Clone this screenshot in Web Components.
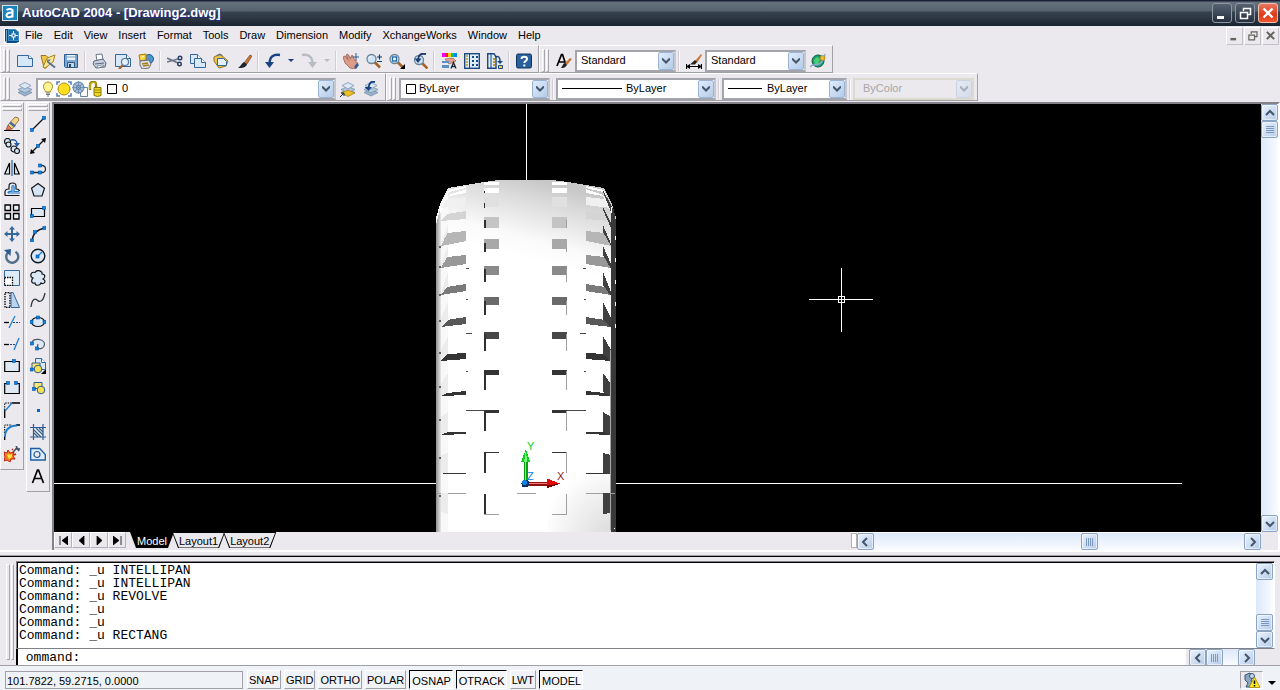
<!DOCTYPE html>
<html lang="en">
<head>
<meta charset="utf-8">
<title>AutoCAD 2004 - [Drawing2.dwg]</title>
<style>
html,body{margin:0;height:100%}
body{font:11px/13px "Liberation Sans",Arial,sans-serif;color:#000;background:#ebe9ed;overflow:hidden}
</style>
</head>
<body>
<cad-app></cad-app>
<script>
const define=(name,css,html,init)=>{
  const t=document.createElement('template');
  t.innerHTML='<style>*{box-sizing:border-box}'+css+'</style>'+html;
  customElements.define(name,class extends HTMLElement{
    constructor(){super();this.attachShadow({mode:'open'})}
    connectedCallback(){
      if(this.shadowRoot.childNodes.length)return;
      this.shadowRoot.append(t.content.cloneNode(true));
      if(init)init.call(this,this.shadowRoot);
    }
  });
};

/* ---------- icons: 16 x 16 grid ---------- */
const dot=(x,y)=>`<rect x="${x-1.5}" y="${y-1.5}" width="3" height="3" fill="#0a84e8" stroke="#0050a0" stroke-width=".6"/>`;
const page=(x,y,w,h)=>`<path d="M${x} ${y}h${w-4}l4 4v${h-4}h${-w}z" fill="#d8e8f6" stroke="#34689c"/><path d="M${x+w-4} ${y}v4h4" fill="#fff" stroke="#34689c"/>`;
const lens=(x,y)=>`<path d="M${x+3} ${y+3}l5.500 5.500" stroke="#a86428" stroke-width="2.600"/><circle cx="${x}" cy="${y}" r="4.500" fill="#cfe4f4" stroke="#6c8498" stroke-width="1.300"/><path d="M${x-2.5} ${y-.5}a2.500 2.500 0 0 1 2-2" fill="none" stroke="#fff"/>`;
const stack='<g stroke="#6c88a8" stroke-width=".7"><path d="M1 11.500l7-3 7 3-7 3.500z" fill="#9cb4cc"/><path d="M1 8.500l7-3 7 3-7 3.500z" fill="#b4c8dc"/><path d="M2 4.500l6-3 6 3-6 3.500z" fill="#dce8f2"/></g>';
const brush='<path d="M8 10l6-8 2 1-5 8z" fill="#c87838" stroke="#5c3418" stroke-width=".6"/><path d="M8 9l3 2.500c-1 3-5 3.500-9 3.500 3-2 3-4 6-6z" fill="#20242c"/>';
const I={
app:'<rect x=".5" y=".5" width="15" height="15" fill="#1c84bc" stroke="#d0e4f0"/><path d="M4.500 5q3.500-2 6 0v7.500M10.500 7.500c-7-.5-7.500 4.500-3.500 4.700q2.500 0 3.500-2" fill="none" stroke="#fff" stroke-width="2"/>',
doc:'<path d="M0 0h16v16H0z" fill="#fff"/><path d="M1 1h10l4 3v10l-3 1H3l-2-2z" fill="#0a4c84"/><path d="M4.500 1.500h7l3 3v8h-10z" fill="#1870ac" stroke="#60a8d8" stroke-width=".6"/><path d="M2.500 2v12" stroke="#8cb8d8" stroke-width=".8"/><path d="M9.500 3v9M5 7.500h9" stroke="#fff"/><rect x="8" y="6" width="3" height="3" fill="#1870ac" stroke="#fff"/>',
new:'<path d="M.5 2.500h11l4 3v8h-15z" fill="#d4e8f8" stroke="#34689c"/><path d="M11.500 2.500v3h4" fill="#fff" stroke="#34689c"/>',
open:'<path d="M1 2.500h5l2 2h4L6 15H4z" fill="#f0c848" stroke="#9c7420"/><path d="M3 14L7 5l8-3-2 7-8 6z" fill="#fce890" stroke="#a88020"/><path d="M8 9l7 5.500" stroke="#5c7490" stroke-width="2"/><path d="M7 10V6.500h4z" fill="#5c7490"/>',
save:'<path d="M1.500 1.500h13v13h-12l-1-1z" fill="#7ca8d4" stroke="#2c5c94"/><path d="M4 2h8v5H4z" fill="#e8f4fc"/><path d="M4 4h8" stroke="#7c9cbc"/><path d="M4.500 9.500h7v5h-7z" fill="#c4d8e8" stroke="#34587c"/><path d="M6 11h2v3H6z" fill="#204470"/>',
print:'<path d="M4 1.500l6-.5 1 6-6 1z" fill="#fff" stroke="#68788c"/><path d="M2 8l9-2 3 4-1 4-9 1-3-4z" fill="#c8d0dc" stroke="#586880"/><path d="M3 11l9-1" stroke="#586880"/><path d="M5 13l6-1 1 1-6 2z" fill="#fff" stroke="#586880" stroke-width=".6"/>',
preview:page(.5,1.5,15,12)+'<path d="M8 12l-4 4" stroke="#a86428" stroke-width="2.200"/><circle cx="10" cy="9" r="3.500" fill="#e4f2fc" stroke="#5c7894" stroke-width="1.200"/>',
publish:'<circle cx="11" cy="6" r="4.500" fill="#4c94cc" stroke="#1c5c94"/><path d="M1 2l7-1v6l-6 1z" fill="#ffd040" stroke="#a87c10"/><path d="M3 5l3-2" stroke="#fff"/><path d="M2 8l9-1 2 4-2 4-7 1-2-4z" fill="#dce0e8" stroke="#686c78"/><path d="M4 11l6-1M5 13l6-1" stroke="#a87c10" stroke-width="1.500"/>',
cut:'<path d="M0 5l11 5M0 9l11-3" stroke="#6c7888" stroke-width="1.600"/><circle cx="13" cy="5" r="1.800" fill="none" stroke="#283c64" stroke-width="1.400"/><circle cx="12.500" cy="11" r="1.800" fill="none" stroke="#283c64" stroke-width="1.400"/>',
copy:page(.5,1.5,11,9)+page(4.5,5.5,11,9),
paste:'<path d="M1 4l6-3 8 7-2 5-7 2-5-7z" fill="#ecc450" stroke="#94741c"/><path d="M4.500 5.500h6l3 3v4h-9z" fill="#e4f0fa" stroke="#34689c"/><path d="M4 3q3-3 5 0" fill="none" stroke="#68707c" stroke-width="1.600"/>',
brush:brush,
undo:'<path d="M15 2C8 1 4.500 4 4.500 11" fill="none" stroke="#1c4484" stroke-width="2.400"/><path d="M0 9h9l-4.500 6z" fill="#1c4484"/>',
redo:'<path d="M1 2c7-1 10.500 2 10.500 9" fill="none" stroke="#b8bcc0" stroke-width="2.400"/><path d="M7 9h9l-4.500 6z" fill="#b8bcc0"/>',
pan:'<path d="M0 4l2-1 3 3-2-4 1.500-1L8 5l1-3 4 7 2 1-3 6-5-1-5-5z" fill="#dc9c88" stroke="#8c5448" stroke-width=".7"/><path d="M2 3l4 5M4.500 1.500L8 7" stroke="#a86c5c" stroke-width=".7"/><path d="M13 0v8M9.500 4h7" stroke="#2c5c94"/><path d="M11 14l3-4 2 2-3 4z" fill="#2c5c94"/>',
zoomrt:lens(5.5,6)+'<path d="M11 4h5M13.500 1.500v5M11 8.500h5" stroke="#103c70" stroke-width="1.200"/>',
zoomwin:lens(5.5,6)+'<rect x="3.500" y="4" width="4" height="4" fill="#fff" stroke="#1c64a4" stroke-width="1.300"/><path d="M16 11v5h-5z" fill="#000"/>',
zoomprev:lens(7,7)+'<path d="M14 1C9 0 6 2 6 7" fill="none" stroke="#1c3c74" stroke-width="2"/><path d="M2.500 5.500h7L6 10z" fill="#1c3c74"/>',
props:'<path d="M1 0h3v4H1z" fill="#f0f"/><path d="M4 0h3v4H4z" fill="#e82020"/><path d="M7 0h3v4H7z" fill="#fc0"/><path d="M10 0h3v4h-3z" fill="#0c4"/><path d="M13 0h3v4h-3z" fill="#08f"/><path d="M4 6l8-1 3 3-7 3z" fill="#e0a08c" stroke="#8c5448" stroke-width=".6"/><path d="M1 8h7v2H1zM1 12h7v3H1z" fill="#5890c4"/><path d="M10 15.500l2.500-6 2.500 6M11 13.500h3" fill="none" stroke="#202838" stroke-width="1.300"/>',
dc:'<rect x=".7" y=".7" width="14.600" height="14.600" fill="#dcecf8" stroke="#1c4880" stroke-width="1.400"/><path d="M5.500 1v14" stroke="#1c4880"/><path d="M2 3h2M2 6h2M2 9h2M2 12h2" stroke="#c89820" stroke-width="1.500"/><path d="M8 4h2M12 4h2M8 8h2M12 8h2M8 12h2M12 12h2" stroke="#1c4880" stroke-width="2"/>',
palettes:'<path d="M.7.7H7l2 3v11.600H.7z" fill="#dcecf8" stroke="#1c4880" stroke-width="1.400"/><path d="M4 1v14" stroke="#1c4880"/><path d="M6 6h2M6 9h2M6 12h2" stroke="#c89820" stroke-width="2"/><path d="M8 4q5-2 5 4" fill="none" stroke="#1c4880" stroke-width="1.500"/><path d="M10 8h6l-3 3z" fill="#1c4880"/><path d="M11.500 12.500h4v3h-4z" fill="#fc4" stroke="#1c4880"/>',
help:'<rect x=".5" y="1" width="15" height="14" rx="1.500" fill="#28609c" stroke="#103460"/><path d="M5.500 6c0-3 5.500-3 5.500 0 0 2-2.700 2-2.700 4M8.300 11.500v2" fill="none" stroke="#fff" stroke-width="2"/>',
textstyle:'<path d="M1 13L5.500 1.500h1L10 12M3 9h6" fill="none" stroke="#000" stroke-width="1.700"/><path d="M9 10l5-5 2 1-5 6z" fill="#c87838"/><path d="M8 10l3 2c-2 3-4 3-6 3z" fill="#222"/>',
dimstyle:'<path d="M0 13.500h16M.5 11v5M15.500 11v5" stroke="#000" stroke-width="1.200"/><path d="M0 13.500l4-2.500v5zM16 13.500l-4-2.500v5z"/><path d="M9 8l6-7 1 1-5 8z" fill="#c87838"/><path d="M9 7l2 2-2 2.500H4z" fill="#222"/>',
web:'<circle cx="8" cy="8" r="6" fill="#18a070" stroke="#0c5c48"/><path d="M4 7l3-3 3 2-2 5-3 1z" fill="#50cc70"/><path d="M0 14C3 10 5 13 9 11S14 6 15 1" fill="none" stroke="#88a8d0" stroke-width="1.600"/><circle cx="12.500" cy="5" r="2.500" fill="#e8bc30" stroke="#947010" stroke-width=".6"/>',
layers:stack,
layercur:stack+'<path d="M1 12l7-3 7 3-7 3.500z" fill="#ecc020" stroke="#94781c" stroke-width=".6"/><path d="M0 16l4-4M1 12h3v3" fill="none" stroke="#102c5c"/>',
layerprev:stack+'<path d="M12 1C8 0 6 2 5.500 7" fill="none" stroke="#1c4484" stroke-width="2"/><path d="M1.500 6h7.500L5.500 10z" fill="#1c4484"/>',
bulb:'<path d="M5.500 11C5 8.500 3.500 8 3.500 5.500a4.500 4.500 0 0 1 9 0c0 2.500-1.500 3-2 5.500z" fill="#fff490" stroke="#a88c20"/><path d="M6 12h4M6 13.500h4M7 15h2" stroke="#707478" stroke-width="1.200"/>',
sun:'<path d="M1 4V1h3M12 1h3v3M15 12v3h-3M4 15H1v-3" stroke="#5880b0" fill="none" stroke-width="1.500"/><circle cx="8" cy="8" r="6" fill="#ffe020" stroke="#a88810"/>',
vpfreeze:'<path d="M8.500 6.500h7v9h-7z" fill="#fff" stroke="#6484a4"/><circle cx="6.500" cy="6.500" r="5.500" fill="#a8bcd4" stroke="#587ca0"/><circle cx="6.500" cy="6.500" r="2" fill="#dce8f4" stroke="#587ca0"/><path d="M6.500 0v13M0 6.500h13M2 2l9 9M11 2l-9 9" stroke="#587ca0" stroke-width=".6"/>',
lock:'<path d="M2 9V4c0-4 6-4 6-1v4" fill="none" stroke="#948010" stroke-width="2.400"/><path d="M2 8V4c0-3 6-3 6-1" fill="none" stroke="#ecd820" stroke-width=".8"/><path d="M6 6.500h7v8q-3.500 2-7 0z" fill="#ecd820" stroke="#887408"/><path d="M6 9h7M6 11.500h7" stroke="#a08c10"/>',
swatch:'<path d="M3.500 3.500h9v9h-9z" fill="#fff" stroke="#000"/>',
erase:'<path d="M0 14.500h16" stroke="#000"/><path d="M2 14l2-5 4 4z" fill="#e87858" stroke="#782c1c" stroke-width=".6"/><path d="M4 9l7-8q4 0 4 3l-7 9z" fill="#f4d488" stroke="#705020" stroke-width=".7"/><path d="M6 6.500l5 4" stroke="#4868a0" stroke-width="2.400"/>',
copyobj:'<g fill="#d8e4f0" stroke="#101820" stroke-width="1.200"><circle cx="3.500" cy="3.500" r="3"/><circle cx="4.500" cy="6.500" r="2.500"/><circle cx="10" cy="11" r="3"/><circle cx="13" cy="13" r="2.500"/></g><path d="M7 2q6-1 6 4" fill="none" stroke="#1c5ca0" stroke-width="1.500"/><path d="M10 5h6l-3 4z" fill="#1c5ca0"/>',
mirror:'<path d="M8 0v16" stroke="#1c64a4" stroke-width="1.200"/><path d="M5.500 3v11H.8zM10.500 3v11h4.700z" fill="#e4ecf4" stroke="#000" stroke-width="1.200"/>',
offset:'<path d="M1 13.500V10q0-3 4-3V4q0-3 3.500-3T12 4v3q3 0 3.500 2M1 13.500h14.500" fill="none" stroke="#101820" stroke-width="1.200"/><path d="M4 11q0-2 4-1.500V4.500q1-2 2 0V9.500h5M4 11h12" fill="none" stroke="#1c7cd0" stroke-width="1.200"/>',
array:'<g fill="#e8f0f8" stroke="#000" stroke-width="1.300"><path d="M1 1h5.500v5.500H1zM9.500 1H15v5.500H9.500zM1 9.500h5.500V15H1zM9.500 9.500H15V15H9.500z"/></g>',
move:'<path d="M8 0l3 3.500H9V7h3.500V5L16 8l-3.500 3V9H9v3.500h2L8 16l-3-3.500h2V9H3.500v2L0 8l3.500-3v2H7V3.500H5z" fill="#34689c"/>',
rotate:'<path d="M4 4.500a6 6 0 1 0 7.500-.8" fill="none" stroke="#50708c" stroke-width="2.400"/><path d="M0 2l7-1-.5 7z" fill="#2c5c94"/>',
scale:'<path d="M.5.500h15v15h-15z" fill="#dcecf8" stroke="#34689c"/><path d="M.5 7.500h8v8h-8z" fill="#fff" stroke="#000" stroke-width="1.300" stroke-dasharray="1.500 1"/>',
stretch:'<path d="M1 .5h5v15H1z" fill="none" stroke="#000" stroke-width="1.300" stroke-dasharray="1.500 1"/><path d="M7 .5h2l6.500 15H7z" fill="#bcd4ec" stroke="#34689c"/>',
trim:'<path d="M0 8.500h5" stroke="#000" stroke-width="1.300"/><path d="M5 14L11 2" stroke="#1c7cd0" stroke-width="1.300"/><path d="M9 8.500h7" stroke="#1c4880" stroke-dasharray="2 1"/>',
extend:'<path d="M0 8.500h5" stroke="#000" stroke-width="1.300"/><path d="M6 8.500h5" stroke="#1c4880" stroke-dasharray="2 1"/><path d="M10 14l5-12" stroke="#1c7cd0" stroke-width="1.300"/>',
break1:'<path d="M.7 3.500h14.600v10H.7z" fill="#e0e8f4" stroke="#000" stroke-width="1.200"/>'+dot(10,3),
break2:'<path d="M4 3.500H.7v10h14.600v-10H12" fill="#e0e8f4" stroke="#000" stroke-width="1.200"/>'+dot(4,3)+dot(12,3),
chamfer:'<path d="M.7 16V8M8 1h8" stroke="#000" stroke-width="1.300"/><path d="M.7 8V1H8" fill="none" stroke="#000" stroke-dasharray="1.500 1"/><path d="M1 9l7-8" stroke="#1c7cd0" stroke-width="1.300"/>',
fillet:'<path d="M.7 16v-4M12 1h4" stroke="#000" stroke-width="1.300"/><path d="M.7 9V1H8" fill="none" stroke="#000" stroke-dasharray="1.500 1"/><path d="M1 13Q1 2 13 1.500" fill="none" stroke="#1c7cd0" stroke-width="1.800"/>',
explode:'<path d="M0 6l3 1 1-3 2 3 4-1-1 4 2 3-4 0-1 3-3-2-3 1 1-4z" fill="#f08020" stroke="#c02010"/><path d="M3 9l2-1 1 1 2-1v3l-3 2z" fill="#ffe840"/><path d="M9 6l4-4M12 0l3 5M11 3l5 0" stroke="#404c60" stroke-width="1.500"/><path d="M10 9l2-1M8 3l1 1" stroke="#c02010" stroke-width="1.500"/>',
line:'<path d="M2 14L14 2" stroke="#101010" stroke-width="1.300"/>'+dot(2,14)+dot(14,2),
xline:'<path d="M2 14L14 2" stroke="#101010" stroke-width="1.200"/><path d="M0 16l1-5 4 4zM16 0l-1 5-4-4z" fill="#000"/>'+dot(8,8),
pline:'<path d="M2 12.500h8M9 5.500h3a3 3 0 0 1 0 7h-2" fill="none" stroke="#203040" stroke-width="1.300"/>'+dot(2,12.500)+dot(10,12.500)+dot(10,5.500),
polygon:'<path d="M8 1.500l6.500 4.700L12 14H4L1.500 6.200z" fill="#d8e4f4" stroke="#101820" stroke-width="1.200"/>',
rect:'<path d="M1.500 4.500h13v8h-13z" fill="#dce8f6" stroke="#000" stroke-width="1.200"/>'+dot(1.8,12)+dot(14,4),
arc:'<path d="M2 15Q3 4 15 2" fill="none" stroke="#101820" stroke-width="1.300"/>'+dot(2,14.500)+dot(5,6)+dot(14.400,2),
circle:'<circle cx="8" cy="8" r="6.800" fill="#dce8f6" stroke="#101820" stroke-width="1.400"/><path d="M8 8l4-4" stroke="#1c7cd0" stroke-width="1.200"/>'+dot(7.500,8.500),
cloud:'<path d="M3 8C-1 7 1 1 5 2.500 7-1 13 1 12 4c4 0 3 4 1 5 4 2 1 6-2 4-1 3-6 3-6 0-4 1-4-3-2-5z" fill="#dce8f6" stroke="#101820" stroke-width="1.200"/>',
spline:'<path d="M1 15C2 7 5 6 7 8s6 3 8-7" fill="none" stroke="#303840" stroke-width="1.300"/>',
ellipse:'<ellipse cx="8" cy="8" rx="6.500" ry="4.500" fill="#dce8f6" stroke="#101820" stroke-width="1.200"/>'+dot(1.500,8)+dot(14.500,8)+dot(8,3.500),
ellarc:'<path d="M2 7C3 1 15 3 14.500 8.500 14 13 10 13 7 12.500L8 8" fill="#dce8f6" stroke="#505860" stroke-width="1.200"/>'+dot(2,7.500)+dot(7,12.500),
insblock:page(5.5,.5,10,11)+'<path d="M2 5h8v6H2z" fill="#ffe868" stroke="#2c5c94"/><circle cx="8" cy="11" r="3.800" fill="#f4e050" stroke="#2c5c94"/>'+dot(1.600,11.500)+'<path d="M16 11v5h-5z"/>',
mkblock:'<path d="M4 2.500h8v6H4z" fill="#ffe868" stroke="#2c5c94"/><circle cx="11" cy="10" r="3.800" fill="#f4e050" stroke="#2c5c94"/>'+dot(4,9),
point:'<path d="M7 7h3v3H7z" fill="#0a64c0"/>',
hatch:'<path d="M4 4h9v9H4z" fill="#e8f2fa"/><path d="M4 6l7 7M4 9l4 4M6 4l7 7M9 4l4 4M12 4l1 1" stroke="#405c80" stroke-width="1.200"/><path d="M0 3.500h16M0 13h16M3.500 0v16M13 0v16" stroke="#2c5c94" stroke-width="1.200"/>',
region:'<path d="M.7 2.500h9l5.600 6v5.500H.7z" fill="#dcecf8" stroke="#1c5ca0" stroke-width="1.300"/><circle cx="7" cy="8.500" r="3" fill="#ebe9ed" stroke="#2c5c94" stroke-width="1.200"/>',
mtext:'<path d="M2.500 15L7.500 2h1l5 13M4.500 10.500h7" fill="none" stroke="#000" stroke-width="1.700"/>',
tray:'<path d="M1 3l5-2 3 3-2 5 4 4-2 2H2l2-4-3-3z" fill="#8ca4bc" stroke="#34587c"/><circle cx="8" cy="4" r="2.500" fill="#c4d8e8" stroke="#34587c"/><path d="M10.500 5L16 15.500H5z" fill="#ffe820" stroke="#a08808" stroke-width=".8"/><path d="M10.500 8.500V12M10.500 13v1.500" stroke="#000" stroke-width="1.500"/>'
};
define('cad-icon',':host{display:block;width:16px;height:16px;flex:none}svg{display:block;width:100%;height:100%}','<svg viewBox="0 0 16 16" aria-hidden="true"></svg>',function(r){r.querySelector('svg').innerHTML=I[this.getAttribute('name')]||''});

define('cad-tool',':host{display:block;flex:none;width:23px;height:22px}:host([side]){width:22px}:host([tight]){width:13px}button{width:100%;height:100%;padding:0;border:0;background:none;display:flex;align-items:center;justify-content:center}button:hover{background:#fff8}i{border:3px solid transparent;border-top-color:var(--arrow,#1c3c80);border-bottom:0}',
'<button type="button"></button>',function(r){const b=r.querySelector('button'),n=this.getAttribute('icon');b.setAttribute('aria-label',n||'More');b.innerHTML=n?`<cad-icon name="${n}"></cad-icon>`:'<i></i>'});

define('cad-grip',':host{display:flex;gap:1px;flex:none;width:12px;height:23px;padding:0 2px}:host([side]){flex-direction:column;width:20px;height:10px;padding:1px 0 2px}i{flex:1;max-width:3px;border:1px solid;border-color:#fff #a8a8ac #a8a8ac #fff}:host([side]) i{max-width:none}','<i></i><i></i>');
define('cad-sep',':host{display:block;flex:none;width:6px;height:20px;padding-left:2px}i{display:block;height:100%;width:2px;border-left:1px solid #d0ced4;border-right:1px solid #f8f8fa}','<i></i>');
define('cad-bar',':host{display:flex;align-items:center;height:28px;padding:3px 3px 0 0;border:1px solid;border-color:#fff #a0a0a6 #a0a0a6 #fff;flex:none}:host([side]){flex-direction:column;width:24px;height:auto;padding:0 0 4px}','<slot></slot>');

define('cad-select',`:host{display:grid;flex:none;width:var(--w,101px);height:22px;border:2px solid #a4a4ac;border-right-color:#c8c8d0;background:#fff}
:host([off]){border-color:#dcdace;background:#ebe9ed}
select,.face{grid-area:1/1;min-width:0}
select{appearance:none;border:0;margin:0;background:none;width:100%;font:inherit;color:inherit;padding:0 20px 0 var(--pad,4px);outline:0}
select:disabled{color:#a8a6aa;opacity:1}
.face{display:flex;align-items:center;pointer-events:none;padding-left:2px}
hr{border:0;border-top:1px solid #000;margin:0 0 0 2px;width:var(--line,0)}
b{margin-left:auto;width:16px;height:18px;border:1px solid #9cb4d4;border-radius:2px;background:linear-gradient(135deg,#e0ecfc,#b4cce8);display:grid;place-items:center}
:host([off]) b{opacity:.4}
svg{width:8px;height:6px}`,
'<select><option></option></select><div class="face"><slot></slot><hr><b><svg viewBox="0 0 8 6"><path d="M0 .5l4 4 4-4" fill="none" stroke="#44566c" stroke-width="2"/></svg></b></div>',
function(r){const s=r.querySelector('select');s.firstChild.textContent=this.getAttribute('value');s.setAttribute('aria-label',this.getAttribute('label'));s.disabled=this.hasAttribute('off');if(!this.hasAttribute('line'))r.querySelector('hr').hidden=true});

define('cad-scroll',`:host{display:flex;flex-direction:column;width:17px;min-height:0;background:linear-gradient(90deg,#dce8fa,#fafcff)}
:host([across]){flex-direction:row;width:auto;height:17px;background:linear-gradient(#dce8fa,#fafcff)}
button{flex:none;width:17px;height:17px;padding:0;border:1px solid #8ca4c4;border-radius:2px;background:linear-gradient(135deg,#e8f2fe,#b8cce8);box-shadow:inset 0 0 0 1px #fff8;display:grid;place-items:center}
.a{flex:var(--before,1)}.z{flex:var(--after,1)}
svg{width:10px;height:10px}path{fill:none;stroke:#44566c;stroke-width:2}
.t path{stroke:#7c98c0;stroke-width:1}
:host([across]) svg{transform:rotate(-90deg)}`,
'<button aria-label="Back"><svg viewBox="0 0 10 10"><path d="M1 7l4-4 4 4"/></svg></button><span class="a"></span><button class="t" aria-label="Scroll thumb"><svg viewBox="0 0 10 10"><path d="M1 1.500h8M1 3.500h8M1 5.500h8M1 7.500h8"/></svg></button><span class="z"></span><button aria-label="Forward"><svg viewBox="0 0 10 10"><path d="M1 3l4 4 4-4"/></svg></button>');

const winGlyph={min:'<path d="M3 11h7v3H3z" fill="currentColor"/>',max:'<path d="M6.500 3v3M5.800 3.500h8.400M13.500 3v7M11 9.500h3" stroke="currentColor" fill="none" stroke-width="1.500"/><path d="M3.500 7.500h7v6h-7z" fill="none" stroke="currentColor" stroke-width="1.500"/>',close:'<path d="M3.500 3.500l9 9M12.500 3.500l-9 9" stroke="currentColor" stroke-width="2.400"/>'};
define('cad-winbtn',`:host{display:block;width:20px;height:20px;color:#fff}:host([mdi]){width:17px;height:18px;color:#66645e}
button{width:100%;height:100%;padding:1px;color:inherit;border:1px solid #8c96a4;border-radius:3px;background:linear-gradient(#566272,#26303e);display:grid;place-items:center}
:host([kind=close]) button{background:linear-gradient(#e87860,#e03818 60%,#f05830);border-color:#f0c0b0}
:host([mdi]) button{background:#ebe9ed;border:1px solid;border-color:#fff #c4c2c8 #c4c2c8 #fff;border-radius:0}
svg{width:16px;height:16px}:host([mdi]) svg{width:13px;height:13px}`,'<button type="button"><svg viewBox="0 0 16 16"></svg></button>',
function(r){const k=this.getAttribute('kind');r.querySelector('button').setAttribute('aria-label',k);r.querySelector('svg').innerHTML=winGlyph[k]});

define('cad-title',`:host{display:flex;align-items:center;gap:3px;height:26px;flex:none;padding:0 2px;background:linear-gradient(#1a2036 0,#1a2036 1px,#66727e 2px,#56626e 11px,#36434f 12px,#2c3844 18px,#1c2632 25px)}
h1{margin:0;padding-left:1px;font:bold 13px/16px "Liberation Sans",Arial,sans-serif;color:#fff;text-shadow:1px 1px #1c2c8c;flex:1}`,
'<cad-icon name="app"></cad-icon><h1>AutoCAD 2004 - [Drawing2.dwg]</h1><cad-winbtn kind="min"></cad-winbtn><cad-winbtn kind="max"></cad-winbtn><cad-winbtn kind="close"></cad-winbtn>');

define('cad-menu',`:host{display:flex;align-items:center;height:19px;flex:none;padding:0 0 0 4px}
nav{display:flex;flex:1;gap:11px;padding-left:5px}a{color:#000;text-decoration:none}
span{display:flex;gap:1px;padding-right:1px}`,
'<cad-icon name="doc"></cad-icon><nav></nav><span><cad-winbtn mdi kind="min"></cad-winbtn><cad-winbtn mdi kind="max"></cad-winbtn><cad-winbtn mdi kind="close"></cad-winbtn></span>',
function(r){r.querySelector('nav').innerHTML='File,Edit,View,Insert,Format,Tools,Draw,Dimension,Modify,XchangeWorks,Window,Help'.split(',').map(t=>`<a href="#">${t}</a>`).join('')});

const tools=(s,a='')=>s.split(' ').map(n=>n==='|'?'<cad-sep></cad-sep>':n[0]==='v'&&n.length<3?`<cad-tool tight${n==='vg'?' style="--arrow:#b8bcc0"':''}></cad-tool>`:`<cad-tool ${a} icon="${n}"></cad-tool>`).join('');
define('cad-toolbars',':host{display:block;flex:none;height:57px}div{display:flex}.lay{display:flex;width:80px}',
`<div><cad-bar><cad-grip></cad-grip>${tools('new open save | print preview publish | cut copy paste brush | undo v redo vg | pan zoomrt zoomwin zoomprev | props dc palettes | help')}</cad-bar>
<cad-bar><cad-grip></cad-grip>${tools('textstyle')}<cad-select value="Standard" label="Text style"></cad-select><cad-sep></cad-sep>${tools('dimstyle')}<cad-select value="Standard" label="Dimension style"></cad-select>${tools('web')}</cad-bar></div>
<div><cad-bar><cad-grip></cad-grip>${tools('layers')}<cad-select value="0" label="Layer" style="--w:300px;--pad:84px"><span class="lay"><cad-icon name="bulb"></cad-icon><cad-icon name="sun"></cad-icon><cad-icon name="vpfreeze"></cad-icon><cad-icon name="lock"></cad-icon><cad-icon name="swatch"></cad-icon></span></cad-select>${tools('layercur layerprev')}</cad-bar>
<cad-bar><cad-grip></cad-grip><cad-select value="ByLayer" label="Color" style="--w:151px;--pad:18px"><cad-icon name="swatch"></cad-icon></cad-select><cad-sep></cad-sep>
<cad-select line value="ByLayer" label="Linetype" style="--w:160px;--pad:68px;--line:60px"></cad-select><cad-sep></cad-sep>
<cad-select line value="ByLayer" label="Lineweight" style="--w:125px;--pad:43px;--line:34px"></cad-select><cad-sep></cad-sep>
<cad-select off value="ByColor" label="Plot style" style="--w:121px;--pad:8px"></cad-select></cad-bar></div>`);

define('cad-dock',':host{display:flex;align-items:flex-start;gap:2px;width:52px;flex:none}',
`<cad-bar side><cad-grip side></cad-grip>${tools('erase copyobj mirror offset array move rotate scale stretch trim extend break1 break2 chamfer fillet explode','side')}</cad-bar><cad-bar side><cad-grip side></cad-grip>${tools('line xline pline polygon rect arc circle cloud spline ellipse ellarc insblock mkblock point hatch region mtext','side')}</cad-bar>`);

/* ---------- model space: the tyre, seen from the front ---------- */
function tyre(){
  const m=x=>1052-x;
  const poly=(pts,f)=>`<polygon points="${pts.map(p=>p.join()).join(' ')}" fill="${f}"/>`;
  const both=(pts,f)=>poly(pts,f)+poly(pts.map(([x,y])=>[m(x),y]),f);
  const rect=(x,y,w,h,f)=>`<rect x="${x}" y="${y}" width="${w}" height="${h}" fill="${f}"/>`;
  let s='<defs><linearGradient id="b" x1="536" y1="180" x2="516" y2="256" gradientUnits="userSpaceOnUse"><stop offset="0" stop-color="#c8c8c8"/><stop offset=".3" stop-color="#dedede"/><stop offset=".75" stop-color="#fafafa"/><stop offset="1" stop-color="#fff"/></linearGradient><linearGradient id="l"><stop offset="0" stop-color="#909090"/><stop offset="1" stop-color="#e8e8e8"/></linearGradient><radialGradient id="r" cx="616" cy="540" r="75" gradientUnits="userSpaceOnUse"><stop offset="0" stop-color="#d8d8d8"/><stop offset="1" stop-color="#fff"/></radialGradient></defs>';
  s+=poly([[436,532],[436,218],[440,204],[448,188],[466,185],[484,182],[499,180],[552,180],[568,182],[586,185],[604,188],[612,204],[616,218],[616,532]],'url(#b)');
  s+=rect(548,460,63,72,'url(#r)');
  s+=poly([[436,532],[436,225],[441,205],[441,532]],'url(#l)')+poly([[441,532],[441,205],[448,190],[448,532]],'#f8f8f8');
  s+=poly([[611,532],[611,205],[614,210],[616,222],[616,532]],'#383838');
  s+=both([[441,206],[448,190],[466,186],[466,188],[449,192]],'#fff')+both([[449,195],[466,189],[466,193],[449,196],[440,214],[440,208]],'#fff');
  const lug=[[199,197,205,208,'#f0f0f0'],[214,211,219,221,'#d4d4d4'],[233,231,241,246,'#b6b6b6'],[257,255,264,268,'#989898'],[287,284,291,295,'#7a7a7a'],[320,317,324,327,'#585858'],[354,353,359,361,'#343434'],[393,391,395,396,'#343434'],[432,432,434,435,'#343434']];
  for(const[a,b,c,d,f]of lug)s+=both([[447,a],[466,b],[466,c],[441,d]],f);
  s+=rect(443,473,23,1,'#343434')+rect(586,473,23,1,'#343434')+rect(437,493,29,1,'#a0a0a0')+rect(586,493,29,1,'#a0a0a0')+rect(517,493,19,1,'#a0a0a0');
  const blk=[[182,3,'#fff',0,0],[188,5,'#fff',191,2],[197,10,'#e0e0e0',203,5],[217,11,'#c4c4c4',220,8],[239,10,'#a8a8a8',243,9],[266,9,'#8a8a8a',269,13],[297,8,'#6a6a6a',301,14],[332,7,'#484848',334,17],[370,5,'#343434',371,19],[410,3,'#343434',411,20],[452,1,'#343434',452,21],[514,1,'#a0a0a0',494,20]];
  for(const[y,h,f,by,bh]of blk){s+=rect(484,y,15,h,f)+rect(552,y,15,h,f);if(bh)s+=rect(484,by,y<210?1:2,bh,'#303030')+(y>210?rect(566,by,1,bh,'#a0a0a0'):'')}
  for(const[y,w]of[[268,3],[299,2],[333,6],[371,2],[410,19]])s+=rect(466,y,w,1,'#484848')+rect(586-w,y,w,1,'#484848');
  /* shaded flanks of the side lugs: top of the edge, its foot, and where the slope meets the wall */
  for(const[y,foot,top,end]of[[190,192,205,212],[207,210,223,228],[225,232,244,246],[246,255,264,269],[272,285,292,296],[302,320,318,328],[336,353,350,362],[373,392,384,397],[412,432,417,436],[453,473,455,474],[493,514,493,513]]){
    s+=poly([[603,y],[611,top],[611,end],[603,foot]],'#404040');
    if(y>220)s+=poly([[448,y],[441,top],[441,end-1],[448,foot]],'#ececec')+rect(439,top+2,2,2,'#606060');
  }
  for(let y=236;y<330;y+=22)s+=rect(615,y,1,4,'#fff');
  s+=rect(610,350,1,180,'#a8a8a8')+rect(614,528,1,1,'#fff');
  return s;
}
define('cad-view',':host{display:block;background:#000;min-width:0;min-height:0;overflow:hidden}svg{display:block;width:100%;height:100%}text{font:11px "Liberation Sans",Arial,sans-serif}',
`<svg role="img" aria-label="Model space"><g transform="translate(-54 -104)" shape-rendering="crispEdges">
<path d="M526.500 104v78M54 483.500h1128M809 299.500h64M841.500 268v64" stroke="#fff" fill="none"/><path d="M838.500 296.500h6v6h-6z" stroke="#fff" fill="none"/>
${tyre()}
<path d="M524 461h4v20h-4z" fill="#08a010"/><path d="M525 461h1v20h-1z" fill="#60ff60"/><path d="M526 449l4 13h-9z" fill="#08d018"/><path d="M526 449l1 13h-3z" fill="#80ff80"/>
<path d="M529 482h18v4h-18z" fill="#8c1010"/><path d="M529 483h18v1h-18z" fill="#ff7878"/><path d="M560 483.500l-13-5v9z" fill="#e00808"/><path d="M560 484l-13 4v-3z" fill="#700"/>
<circle cx="525.500" cy="483.500" r="4" fill="#083060"/><circle cx="524.500" cy="482.500" r="2.500" fill="#0a84e8"/>
<text x="527" y="450" fill="#08d018">Y</text><text x="527" y="480" fill="#0a84e8">Z</text><text x="557" y="480" fill="#8c2018">X</text>
</g></svg>`);

define('cad-tab',':host{display:block;height:16px;flex:none}:host(:not(:first-of-type)){margin-left:-2px}button{display:block;height:16px;padding:0;border:0;background:#000;font:inherit;color:#000;clip-path:polygon(0 0,100% 0,calc(100% - 6px) 100%,6px 100%)}span{display:block;height:15px;margin:0 1px;padding:0 6px;line-height:16px;background:#ebe9ed;clip-path:polygon(0 0,100% 0,calc(100% - 6px) 100%,6px 100%)}:host([on]) span{background:#000;color:#fff}',
'<button type="button"><span><slot></slot></span></button>');
define('cad-tabs',`:host{display:flex;height:18px;min-width:0}
.n{display:flex}.n button{width:18px;height:16px;padding:0;border:1px solid;border-color:#fff #b4b2b8 #b4b2b8 #fff;background:#ebe9ed;display:grid;place-items:center}
svg{width:9px;height:9px}.t{display:flex;flex:1;padding-left:4px}
.s{display:flex;width:34%;border-top:1px solid #fff}.s i{width:6px;height:15px;border:1px solid;border-color:#b4b2b8;background:#fff}cad-scroll{flex:1;--before:209;--after:147}`,
`<div class="n">${['M1 0v9M9 0v9L3 4.500z','M7 0v9L2 4.500z','M2 0v9L7 4.500z','M8 0v9M0 0v9L6 4.500z'].map((d,i)=>`<button type="button" aria-label="${['First','Previous','Next','Last'][i]} layout"><svg viewBox="0 0 9 9"><path d="${d}" stroke="#000" stroke-width=".8"/></svg></button>`).join('')}</div>
<div class="t"><cad-tab on>Model</cad-tab><cad-tab>Layout1</cad-tab><cad-tab>Layout2</cad-tab></div><div class="s"><i></i><cad-scroll across></cad-scroll></div>`);
define('cad-main',`:host{display:flex;flex:1;min-height:0}
section{flex:1;display:grid;grid-template:minmax(0,1fr) 18px / minmax(0,1fr) 17px;border:2px solid #848288;border-right-color:#fff;border-bottom:0;min-width:0}
cad-scroll{--before:0;--after:1}`,
'<cad-dock></cad-dock><section><cad-view></cad-view><cad-scroll></cad-scroll><cad-tabs></cad-tabs></section>');

define('cad-command',`:host{display:flex;flex:none;height:117px;border-top:2px solid #fff;padding:3px 5px 0 0}
:host{background:linear-gradient(#ebe9ed 3px,#a0a0a6 3px,#a0a0a6 4px,#000 4px,#000 5px,#ebe9ed 5px)}
.g{display:flex;gap:1px;width:16px;padding:9px 2px 7px 6px}.g i{flex:1;border:1px solid;border-color:#fff #a8a8ac #a8a8ac #fff}
.b{flex:1;min-width:0;margin-top:6px;display:flex;flex-direction:column}
.h{display:flex;height:88px;flex:none;border:1px solid #808086;border-right-color:#fff;background:#fff;box-shadow:inset 1px 1px #000;padding:1px 1px 0 2px}
pre{margin:0;padding-top:1px;flex:1;font:13px/13px "Liberation Mono","Courier New",monospace}
.i{display:flex;height:16px;padding-right:20px}.i input{flex:1;min-width:0;border:0;border-left:2px solid #000;background:#fff;padding:0;font:13px/15px "Liberation Mono","Courier New",monospace;outline:0}
.i cad-scroll{width:66px;margin-left:3px;height:16px;--before:0;--after:1}`,
`<div class="g"><i></i><i></i></div><div class="b"><div class="h"><pre>Command: _u INTELLIPAN
Command: _u INTELLIPAN
Command: _u REVOLVE
Command: _u
Command: _u
Command: _u RECTANG</pre><cad-scroll style="--before:34;--after:0"></cad-scroll></div><div class="i"><input aria-label="Command line" value=" ommand:"><cad-scroll across></cad-scroll></div></div>`);

define('cad-toggle',':host{display:block;flex:none}button{height:19px;padding:1px 1px 0;font:inherit;line-height:16px;white-space:nowrap;background:#eff2f7;border:1px solid;border-color:#fff #a0a0a6 #a0a0a6 #fff}:host([on]) button{border-color:#000 #fff #fff #000;padding:2px 1px 0 2px;background:#f6f8fb}','<button type="button"><slot></slot></button>');
define('cad-status',`:host{display:flex;align-items:center;gap:3px;height:25px;flex:none;padding:3px 2px 0 5px;margin-top:-2px;background:#eff2f7;border-top:1px solid #a0a0a6}
output{width:238px;height:18px;margin-right:1px;padding-left:1px;line-height:18px;border:1px solid #a0a0a6}
.f{flex:1}.y{width:23px;height:18px;display:grid;place-items:center;border:1px solid;border-color:#a0a0a6 #fff #fff #a0a0a6;background:#ebe9ed}
.d{width:12px;height:18px;padding:6px 0 0;border:0;background:none;display:grid;place-items:center}.d i{border:4px solid transparent;border-top-color:#000;border-bottom:0}`,
`<output>101.7822, 59.2715, 0.0000</output><cad-toggle>SNAP</cad-toggle><cad-toggle>GRID</cad-toggle><cad-toggle>ORTHO</cad-toggle><cad-toggle>POLAR</cad-toggle><cad-toggle on>OSNAP</cad-toggle><cad-toggle on>OTRACK</cad-toggle><cad-toggle>LWT</cad-toggle><cad-toggle on>MODEL</cad-toggle><span class="f"></span><span class="y"><cad-icon name="tray"></cad-icon></span><button class="d" type="button" aria-label="Status bar menu"><i></i></button>`);

define('cad-app',':host{display:flex;flex-direction:column;height:100vh;background:#ebe9ed}','<cad-title></cad-title><cad-menu></cad-menu><cad-toolbars></cad-toolbars><cad-main></cad-main><cad-command></cad-command><cad-status></cad-status>');
</script>
</body>
</html>
